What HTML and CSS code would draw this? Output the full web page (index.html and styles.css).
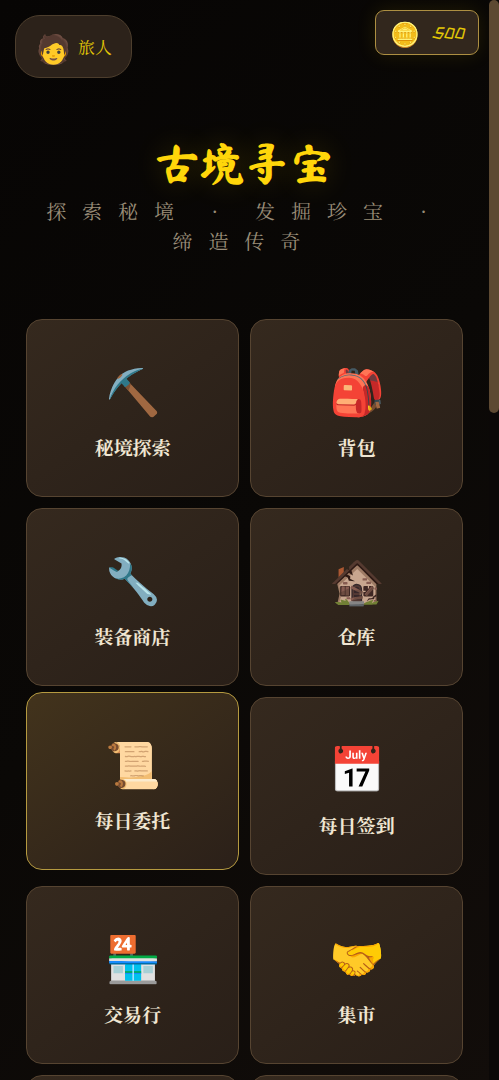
FILE: index.html
```html
<!DOCTYPE html>
<html lang="zh-CN">
<head>
  <meta charset="UTF-8" />
  <meta name="viewport" content="width=device-width, initial-scale=1.0"/>
  <title>古境寻宝</title>
  <link rel="stylesheet" href="styles.css">
</head>
<body>
  <div class="page">
    <header class="top-bar">
      <button type="button" class="user-info"><span class="avatar">🧑</span><span class="user-name">旅人</span></button>
      <div class="coins"><span class="coin-icon">🪙</span><span class="coin-count">500</span></div>
    </header>

    <div class="hero">
      <h1>古境寻宝</h1>
      <p>探索秘境 · 发掘珍宝 · 缔造传奇</p>
    </div>

    <main class="menu-grid">
      <button type="button" class="menu-card"><span class="icon">⛏️</span><span class="label">秘境探索</span></button>
      <button type="button" class="menu-card"><span class="icon">🎒</span><span class="label">背包</span></button>
      <button type="button" class="menu-card"><span class="icon">🔧</span><span class="label">装备商店</span></button>
      <button type="button" class="menu-card"><span class="icon">🏚️</span><span class="label">仓库</span></button>
      <button type="button" class="menu-card active"><span class="icon">📜</span><span class="label">每日委托</span></button>
      <button type="button" class="menu-card"><span class="icon">📅</span><span class="label">每日签到</span></button>
      <button type="button" class="menu-card"><span class="icon">🏪</span><span class="label">交易行</span></button>
      <button type="button" class="menu-card"><span class="icon">🤝</span><span class="label">集市</span></button>
      <button type="button" class="menu-card"></button>
      <button type="button" class="menu-card"></button>
    </main>
  </div>
  <div class="scroll-track"><div class="scroll-thumb"></div></div>
</body>
</html>
```

FILE: styles.css
```css
* {
  box-sizing: border-box;
}

body {
  margin: 0;
  font-family: "Noto Serif SC", "Noto Serif CJK SC", "Noto Sans CJK SC", serif;
  background: linear-gradient(135deg, #070504, #0a0806 50%, #120d0a);
  color: #f0e6d2;
}

button {
  font-family: inherit;
  color: inherit;
  cursor: pointer;
}

.page {
  height: 100vh;
  padding-right: 10px;
  overflow-y: auto;
  scrollbar-width: none;
}

.top-bar {
  display: flex;
  justify-content: space-between;
  align-items: flex-start;
  padding: 10px 10px 0 15px;
}

.user-info {
  display: flex;
  align-items: center;
  gap: 7px;
  height: 63px;
  margin-top: 5px;
  padding: 0 19px 0 20px;
  background: #2c221a;
  border: 1px solid #4d3e2d;
  border-radius: 25px;
}

.avatar {
  font-size: 28px;
  line-height: 34px;
}

.user-name {
  font-size: 17px;
  color: #e3c806;
}

.coins {
  display: flex;
  align-items: center;
  gap: 12px;
  height: 45px;
  padding: 0 14px;
  background: #32271d;
  border: 1px solid #ad8f42;
  border-radius: 9px;
  box-shadow: 0 0 20px rgba(255, 215, 0, 0.1);
}

.coin-icon {
  font-size: 24px;
  line-height: 24px;
}

.coin-count {
  font-family: "ZCOOL KuaiLe", "DejaVu Sans", sans-serif;
  font-size: 16px;
  font-style: italic;
  color: #e3c806;
}

.hero {
  padding: 52px 26px 63px;
  text-align: center;
}

.hero h1 {
  margin: 0;
  font-size: 45px;
  line-height: 66px;
  font-family: "Ma Shan Zheng", KaiTi, "Noto Sans CJK SC", sans-serif;
  color: #ffd60a;
  text-shadow: 0 0 30px rgba(255, 215, 0, 0.2);
}

.hero p {
  margin: 0;
  font-size: 20px;
  line-height: 30px;
  letter-spacing: 16px;
  color: #9a8d78;
}

.menu-grid {
  display: grid;
  grid-template-columns: 1fr 1fr;
  gap: 11px;
  padding: 0 26px 26px;
}

.menu-card {
  display: flex;
  flex-direction: column;
  align-items: center;
  gap: 19px;
  min-height: 178px;
  padding: 44px 10px 34px;
  background: linear-gradient(145deg, #35291e, #291f18);
  border: 1px solid #564431;
  border-radius: 16px;
}

.menu-card.active {
  background: linear-gradient(145deg, #42331c, #2b2019);
  border-color: #b59a40;
  transform: translateY(-5px);
}

.icon {
  font-size: 45px;
  line-height: 50px;
}

.label {
  font-size: 19px;
  line-height: 28px;
  font-weight: bold;
}

.scroll-track {
  position: fixed;
  top: 0;
  right: 0;
  bottom: 0;
  width: 10px;
  background: #0b0807;
}

.scroll-thumb {
  height: 413px;
  background: #5d4932;
  border-radius: 5px;
}
```
